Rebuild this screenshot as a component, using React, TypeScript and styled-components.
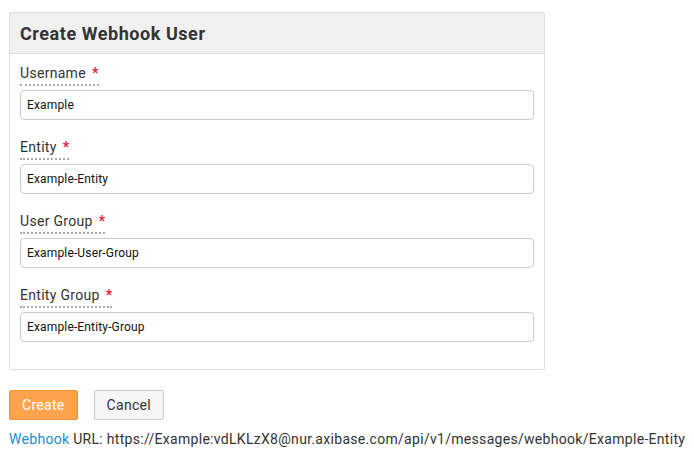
import React from "react";
import styled, { createGlobalStyle } from "styled-components";

const Global = createGlobalStyle`
  html, body { margin: 0; padding: 0; background: #fff; }
  body { font-family: Rubik, Roboto, "Open Sans", sans-serif; color: #333; }
  * { box-sizing: border-box; }
`;

const Page = styled.div`
  padding: 12px 9px 0 9px;
`;

const Panel = styled.div`
  width: 536px;
  border: 1px solid #dddddd;
  border-radius: 2px;
`;

const PanelHeader = styled.div`
  height: 41px;
  background: #f0f0f0;
  border-bottom: 1px solid #dddddd;
  display: flex;
  align-items: center;
  padding: 0 10px;
`;

const Title = styled.h2`
  margin: 0;
  font-size: 18px;
  font-weight: 700;
  color: #333;
  letter-spacing: 0.55px;
  font-family: Roboto, sans-serif;
`;

const PanelBody = styled.div`
  padding: 9px 10px 27px 10px;
  display: flex;
  flex-direction: column;
  gap: 17px;
`;

const Field = styled.div`
  display: flex;
  flex-direction: column;
  align-items: flex-start;
`;

const Label = styled.label`
  font-size: 14px;
  line-height: 20px;
  color: #333;
  letter-spacing: 0.3px;
  padding-bottom: 1px;
  border-bottom: 2px dotted #aaaaaa;
  font-family: Roboto, sans-serif;
`;

const Star = styled.span`
  color: #e8173b;
  margin-left: 6px;
  font-weight: 700;
`;

const Input = styled.input`
  margin-top: 4px;
  width: 100%;
  height: 30px;
  border: 1px solid #cccccc;
  border-radius: 4px;
  padding: 0 6px;
  font-family: Roboto, sans-serif;
  font-size: 12px;
  letter-spacing: 0.15px;
  color: #111;
  outline: none;
`;

const Actions = styled.div`
  display: flex;
  gap: 16px;
  margin-top: 20px;
`;

const Button = styled.button<{ $primary?: boolean }>`
  height: 30px;
  padding: 0 12px;
  font-size: 14px;
  letter-spacing: 0.3px;
  font-family: Roboto, sans-serif;
  border-radius: 2px;
  border: 1px solid ${(p) => (p.$primary ? "#f0923a" : "#cccccc")};
  background: ${(p) => (p.$primary ? "#ffa34d" : "#f5f5f5")};
  color: ${(p) => (p.$primary ? "#ffffff" : "#333333")};
  cursor: pointer;
`;

const UrlLine = styled.div`
  margin-top: 9px;
  font-size: 14px;
  line-height: 20px;
  color: #333;
  letter-spacing: 0.3px;
  font-family: Roboto, sans-serif;
  white-space: nowrap;
`;

const Link = styled.a`
  color: #1a8dd6;
  text-decoration: none;
`;

const fields = [
  { label: "Username", value: "Example" },
  { label: "Entity", value: "Example-Entity" },
  { label: "User Group", value: "Example-User-Group" },
  { label: "Entity Group", value: "Example-Entity-Group" },
];

export default function App() {
  return (
    <>
      <Global />
      <Page>
        <Panel>
          <PanelHeader>
            <Title>Create Webhook User</Title>
          </PanelHeader>
          <PanelBody>
            {fields.map((f) => (
              <Field key={f.label}>
                <Label>
                  {f.label}
                  <Star>*</Star>
                </Label>
                <Input defaultValue={f.value} />
              </Field>
            ))}
          </PanelBody>
        </Panel>
        <Actions>
          <Button $primary>Create</Button>
          <Button>Cancel</Button>
        </Actions>
        <UrlLine>
          <Link href="#">Webhook</Link> URL: https://Example:vdLKLzX8@nur.axibase.com/api/v1/messages/webhook/Example-Entity
        </UrlLine>
      </Page>
    </>
  );
}
